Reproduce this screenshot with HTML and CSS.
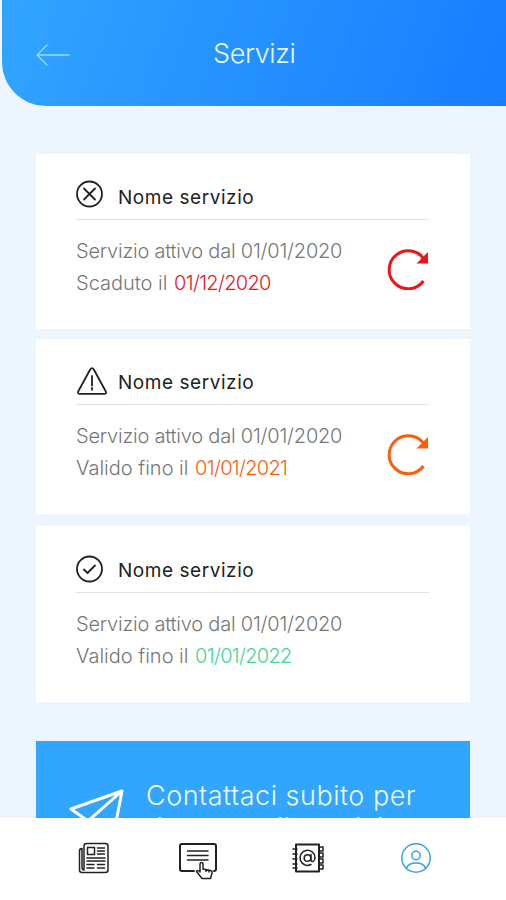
FILE: index.html
```
<!DOCTYPE html>
<html lang="it">

<head>
    <meta charset="UTF-8">
    <meta name="viewport" content="width=device-width, initial-scale=1.0">
    <title>Servizi</title>
    <link rel="stylesheet" href="styles.css">
</head>

<body>

    <div class="app">
        <header class="header">
            <svg class="back" viewBox="0 0 34 22" width="34" height="22">
                <path d="M33 11H1M11 1L1 11l10 10" />
            </svg>
            <h1>Servizi</h1>
        </header>

        <main class="content">
            <section class="card">
                <div class="card-title">
                    <svg class="status" viewBox="0 0 32 30" width="32" height="30">
                        <circle cx="13.5" cy="14" r="12.5" />
                        <path d="M8 8.5l11 11M19 8.5l-11 11" />
                    </svg>
                    <h2>Nome servizio</h2>
                </div>
                <div class="card-body">
                    <div class="card-text">
                        <p class="since">Servizio attivo dal 01/01/2020</p>
                        <p>Scaduto il <span class="date expired">01/12/2020</span></p>
                    </div>
                    <svg class="renew expired" viewBox="0 0 42 42" width="42" height="42">
                        <path class="ring" d="M36.5 33A19 19 0 1 1 37.5 12" />
                        <path class="tip" d="M41 4v11.5H29.5z" />
                    </svg>
                </div>
            </section>

            <section class="card expiring-card">
                <div class="card-title">
                    <svg class="status" viewBox="0 0 32 30" width="32" height="30">
                        <path d="M14.2 3.5L2.3 25.2Q1.2 27.8 4 27.8H28Q31 27.8 29.7 25.2L17.8 3.5Q16 .8 14.2 3.5zM16 10v9.5M16 21.8v2" />
                    </svg>
                    <h2>Nome servizio</h2>
                </div>
                <div class="card-body">
                    <div class="card-text">
                        <p class="since">Servizio attivo dal 01/01/2020</p>
                        <p>Valido fino il <span class="date expiring">01/01/2021</span></p>
                    </div>
                    <svg class="renew expiring" viewBox="0 0 42 42" width="42" height="42">
                        <path class="ring" d="M36.5 33A19 19 0 1 1 37.5 12" />
                        <path class="tip" d="M41 4v11.5H29.5z" />
                    </svg>
                </div>
            </section>

            <section class="card valid-card">
                <div class="card-title">
                    <svg class="status" viewBox="0 0 32 30" width="32" height="30">
                        <circle cx="13.5" cy="14" r="12.5" />
                        <path d="M8 14.5l3.500 3.500 7.500-7.500" />
                    </svg>
                    <h2>Nome servizio</h2>
                </div>
                <div class="card-body">
                    <div class="card-text">
                        <p class="since">Servizio attivo dal 01/01/2020</p>
                        <p>Valido fino il <span class="date valid">01/01/2022</span></p>
                    </div>
                </div>
            </section>

            <section class="contact">
                <svg class="plane" viewBox="0 0 56 56" width="56" height="56">
                    <path d="M53 2L2 20l17 12v16l9-9 16 10zM53 2L19 32" />
                </svg>
                <p>Contattaci subito per<br>rinnovare il servizio</p>
            </section>
        </main>

        <nav class="tabs">
            <svg class="news" viewBox="0 0 32 32" width="32" height="32">
                <path d="M6 27V4q0-2.5 2.5-2.5h19Q30 1.500 30 4v24q0 2.500-2.500 2.500H4Q1.500 30.500 1.500 28V9Q1.500 6.500 4 6.500V25q0 3 2 3" />
                <path d="M9.5 5.500h7v7h-7zM19.500 6h7M19.500 9h7M19.500 12h7M9 16h18M9 19h18M9 22.500h7M9 26h7M19.500 22.500h7M19.500 26h7" />
            </svg>
            <svg class="board" viewBox="0 0 40 38" width="40" height="38">
                <path class="bold" d="M16 29H4q-2 0-2-2V4q0-2 2-2h32q2 0 2 2v23q0 2-2 2" />
                <path d="M9.500 9H30M9.500 13.500H30M9.500 18H30" />
                <path d="M22 30v-7.500q0-2 1.500-2t1.500 2V27l7.500 1.500q2 .5 1.500 2.500l-1.500 5.500H24l-5.500-7q1-2 3.500.5M28 27.500v2M31 28v2" />
            </svg>
            <svg class="contacts" viewBox="0 0 34 32" width="34" height="32">
                <path class="bold" d="M5 2.500h23v27H5z" />
                <path d="M2 7h4M2 12h4M2 17h4M2 22h4M2 26h4M28 5h4v4h-4M28 11h4v4h-4M28 17h4v4h-4M28 23h4v4h-4" />
                <path d="M20 12.500v5q0 2.500 2 2 2-1 2-4A7.500 7.500 0 1 0 20 22.500" />
                <circle cx="16.500" cy="16" r="3.300" />
            </svg>
            <svg class="profile" viewBox="0 0 32 32" width="32" height="32">
                <circle cx="16" cy="16" r="14.200" />
                <circle cx="16" cy="13.500" r="4.200" />
                <path d="M6.500 26q2-5 9.500-5t9.500 5" />
            </svg>
        </nav>
    </div>

</body>

</html>
```
FILE: styles.css
```
body {
    margin: 0;
    background-color: #edf5ff;
    font-family: Inter, "Liberation Sans", sans-serif;
}

.app {
    height: 900px;
    display: flex;
    flex-direction: column;
    overflow: hidden;
}

svg {
    fill: none;
    stroke: #222;
    stroke-width: 1.5;
    stroke-linecap: round;
    stroke-linejoin: round;
    flex-shrink: 0;
}

h1,
h2,
p {
    margin: 0;
    white-space: nowrap;
}

.header {
    height: 106px;
    box-sizing: border-box;
    flex-shrink: 0;
    margin-left: 2px;
    padding: 1px 0 0 34px;
    display: flex;
    align-items: center;
    border-radius: 0 0 0 44px;
    background: linear-gradient(110deg, #32a5ff, #2590ff 50%, #187dff);
}

.header h1 {
    margin-left: 143px;
    font-size: 27px;
    font-weight: 300;
    letter-spacing: -0.4px;
    color: #e9f7ff;
}

.back {
    stroke: #9bdcff;
    stroke-width: 1.3;
    margin-top: 2px;
}

.content {
    flex: 1;
    min-height: 0;
    overflow: hidden;
    padding: 48px 36px 0;
}

.card {
    height: 175px;
    box-sizing: border-box;
    background-color: #fff;
    padding: 26px 41px 0 40px;
    margin-bottom: 12px;
}

.card:first-child {
    margin-bottom: 10px;
}

.card-title {
    height: 39px;
    display: flex;
    align-items: flex-start;
    border-bottom: 1px solid #e2e2e2;
}

.card h2 {
    margin-left: 10px;
    font-size: 19px;
    line-height: 36px;
    font-weight: 400;
    letter-spacing: 0.55px;
    color: #222;
}

.status {
    stroke-width: 1.8;
}

.expiring-card .status {
    margin-top: 1px;
}

.valid-card {
    height: 176px;
    padding-top: 27px;
}

.valid-card .status {
    margin-top: 2px;
}

.card-body {
    display: flex;
    justify-content: space-between;
    padding-top: 15px;
}

.card p {
    font-size: 20px;
    font-weight: 300;
    line-height: 32px;
    color: #777;
}

.card .since {
    letter-spacing: -0.22px;
}

.date {
    margin-left: 1px;
    letter-spacing: -0.7px;
}

.renew {
    margin-top: 13px;
}

.renew .ring {
    stroke: currentColor;
    stroke-width: 3;
    stroke-linecap: butt;
}

.renew .tip {
    fill: currentColor;
    stroke: none;
}

.expired {
    color: #e9161c;
}

.expiring {
    color: #fb5d0d;
}

.valid {
    color: #45d39a;
}

.contact {
    height: 180px;
    margin-top: 39px;
    box-sizing: border-box;
    padding: 39px 33px 0;
    display: flex;
    background-color: #32a5ff;
}

.contact p {
    margin-left: 21px;
    font-size: 27px;
    line-height: 32px;
    font-weight: 300;
    letter-spacing: 0.5px;
    color: #eefaff;
}

.plane {
    stroke: #fff;
    stroke-width: 3;
    margin-top: 9px;
}

.tabs {
    height: 82px;
    box-sizing: border-box;
    flex-shrink: 0;
    padding: 24px 0 0 78px;
    display: flex;
    background-color: #fff;
}

.tabs .bold {
    stroke-width: 2;
}

.board {
    margin-left: 68px;
}

.contacts {
    margin-left: 73px;
}

.profile {
    margin-left: 75px;
    stroke: #3aa0ea;
}
```
